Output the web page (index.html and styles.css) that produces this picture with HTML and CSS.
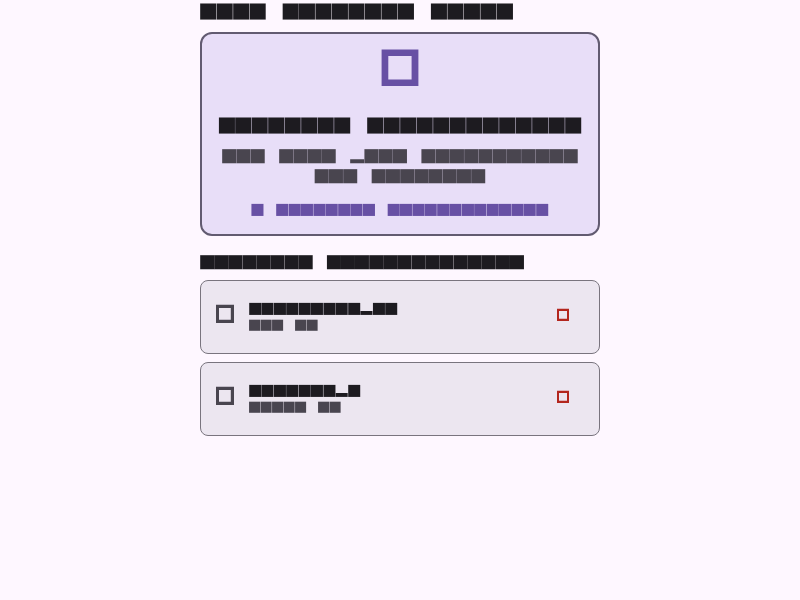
FILE: index.html
```html
<!DOCTYPE html>
<html lang="en">
<head>
<meta charset="utf-8">
<title>Files</title>
<link rel="stylesheet" href="styles.css">
</head>
<body>
<main class="column">
  <h1 class="line title page-title">■■■■ ■■■■■■■■ ■■■■■</h1>
  <section class="drop">
    <svg class="drop-icon" viewBox="0 0 48 48"><path fill-rule="evenodd" d="M5.6 1.4H42.4V38H5.6ZM12.3 8V31.4H35.6V8Z"/></svg>
    <p class="line title drop-title">■■■■■■■■ ■■■■■■■■■■■■■</p>
    <p class="line body">■■■ ■■■■ <span class="low">■</span>■■■ ■■■■■■■■■■■</p>
    <p class="line body">■■■ ■■■■■■■■</p>
    <p class="line small accent">■ ■■■■■■■■ ■■■■■■■■■■■■■</p>
  </section>
  <h2 class="line heading">■■■■■■■■ ■■■■■■■■■■■■■■</h2>
  <ul class="files">
    <li class="file">
      <svg class="file-icon" viewBox="0 0 24 24"><path fill-rule="evenodd" d="M3 3.7H21V22H3ZM6 7V18.7H17.8V7Z"/></svg>
      <div class="info">
        <p class="line small">■■■■■■■■■<span class="low">■</span>■■</p>
        <p class="line tiny">■■■ ■■</p>
      </div>
      <svg class="remove" viewBox="0 0 16 16"><path fill-rule="evenodd" d="M2 1.7H14V14H2ZM4 4V11.8H12V4Z"/></svg>
    </li>
    <li class="file">
      <svg class="file-icon" viewBox="0 0 24 24"><path fill-rule="evenodd" d="M3 3.7H21V22H3ZM6 7V18.7H17.8V7Z"/></svg>
      <div class="info">
        <p class="line small">■■■■■■■<span class="low">■</span>■</p>
        <p class="line tiny">■■■■■ ■■</p>
      </div>
      <svg class="remove" viewBox="0 0 16 16"><path fill-rule="evenodd" d="M2 1.7H14V14H2ZM4 4V11.8H12V4Z"/></svg>
    </li>
  </ul>
</main>
</body>
</html>
```
FILE: styles.css
```css
* { box-sizing: border-box; margin: 0; padding: 0; }
body { background: #fef7ff; color: #1d1b20; }
.column { width: 400px; margin: 0 auto; will-change: transform; }

/* --s is the block size, --gap the space between blocks */
.line {
  --fs: calc(var(--s) / 0.76);
  font-family: "DejaVu Sans", sans-serif;
  font-weight: 400;
  font-size: var(--fs);
  letter-spacing: calc(var(--s) + var(--gap) - var(--fs) * 0.945);
  word-spacing: calc(var(--fs) * 0.627);
  text-indent: calc(var(--fs) * -0.087);
  white-space: nowrap;
  text-rendering: geometricPrecision;
}
.title { --s: 16px; --gap: 0.5px; height: 24px; line-height: 24px; }
.page-title { height: 22px; line-height: 20px; }
.body { --s: 14px; --gap: 0.25px; height: 20px; line-height: 20px; color: #49454f; }
.small { --s: 12px; --gap: 0.4px; height: 16px; line-height: 14px; }
.heading { --s: 14px; --gap: 0.1px; height: 20px; line-height: 20px; margin: 16px 0 8px; }
.tiny { --s: 11px; --gap: 0.5px; height: 16px; line-height: 16px; color: #49454f; }
.low { display: inline-block; text-indent: 0; clip-path: inset(66% -4px -2px -1px); }
.small .low { clip-path: inset(72% -4px -2px -1px); }

.drop {
  display: flex;
  flex-direction: column;
  align-items: center;
  height: 204px;
  margin-top: 10px;
  padding-top: 14px;
  background: #e8def8;
  border: 2px solid #625b71;
  border-radius: 12px;
}
.drop .line { margin-left: -1.6px; }
.drop-icon { width: 48px; height: 48px; flex: none; fill: #6750a4; }
.drop-title { margin-top: 16px; margin-bottom: 10px; }
.accent { margin-top: 16px; color: #6750a4; }

.files { display: grid; gap: 8px; list-style: none; }
.file {
  display: flex;
  align-items: center;
  height: 74px;
  padding: 0 28px 0 12px;
  background: #ece6f0;
  border: 1px solid #79747e;
  border-radius: 8px;
}
.file-icon { width: 24px; height: 24px; margin-bottom: 8px; fill: #49454f; }
.info { flex: 1; margin-left: 12px; }
.remove { width: 16px; height: 16px; margin-bottom: 4px; fill: #b3261e; }
```
